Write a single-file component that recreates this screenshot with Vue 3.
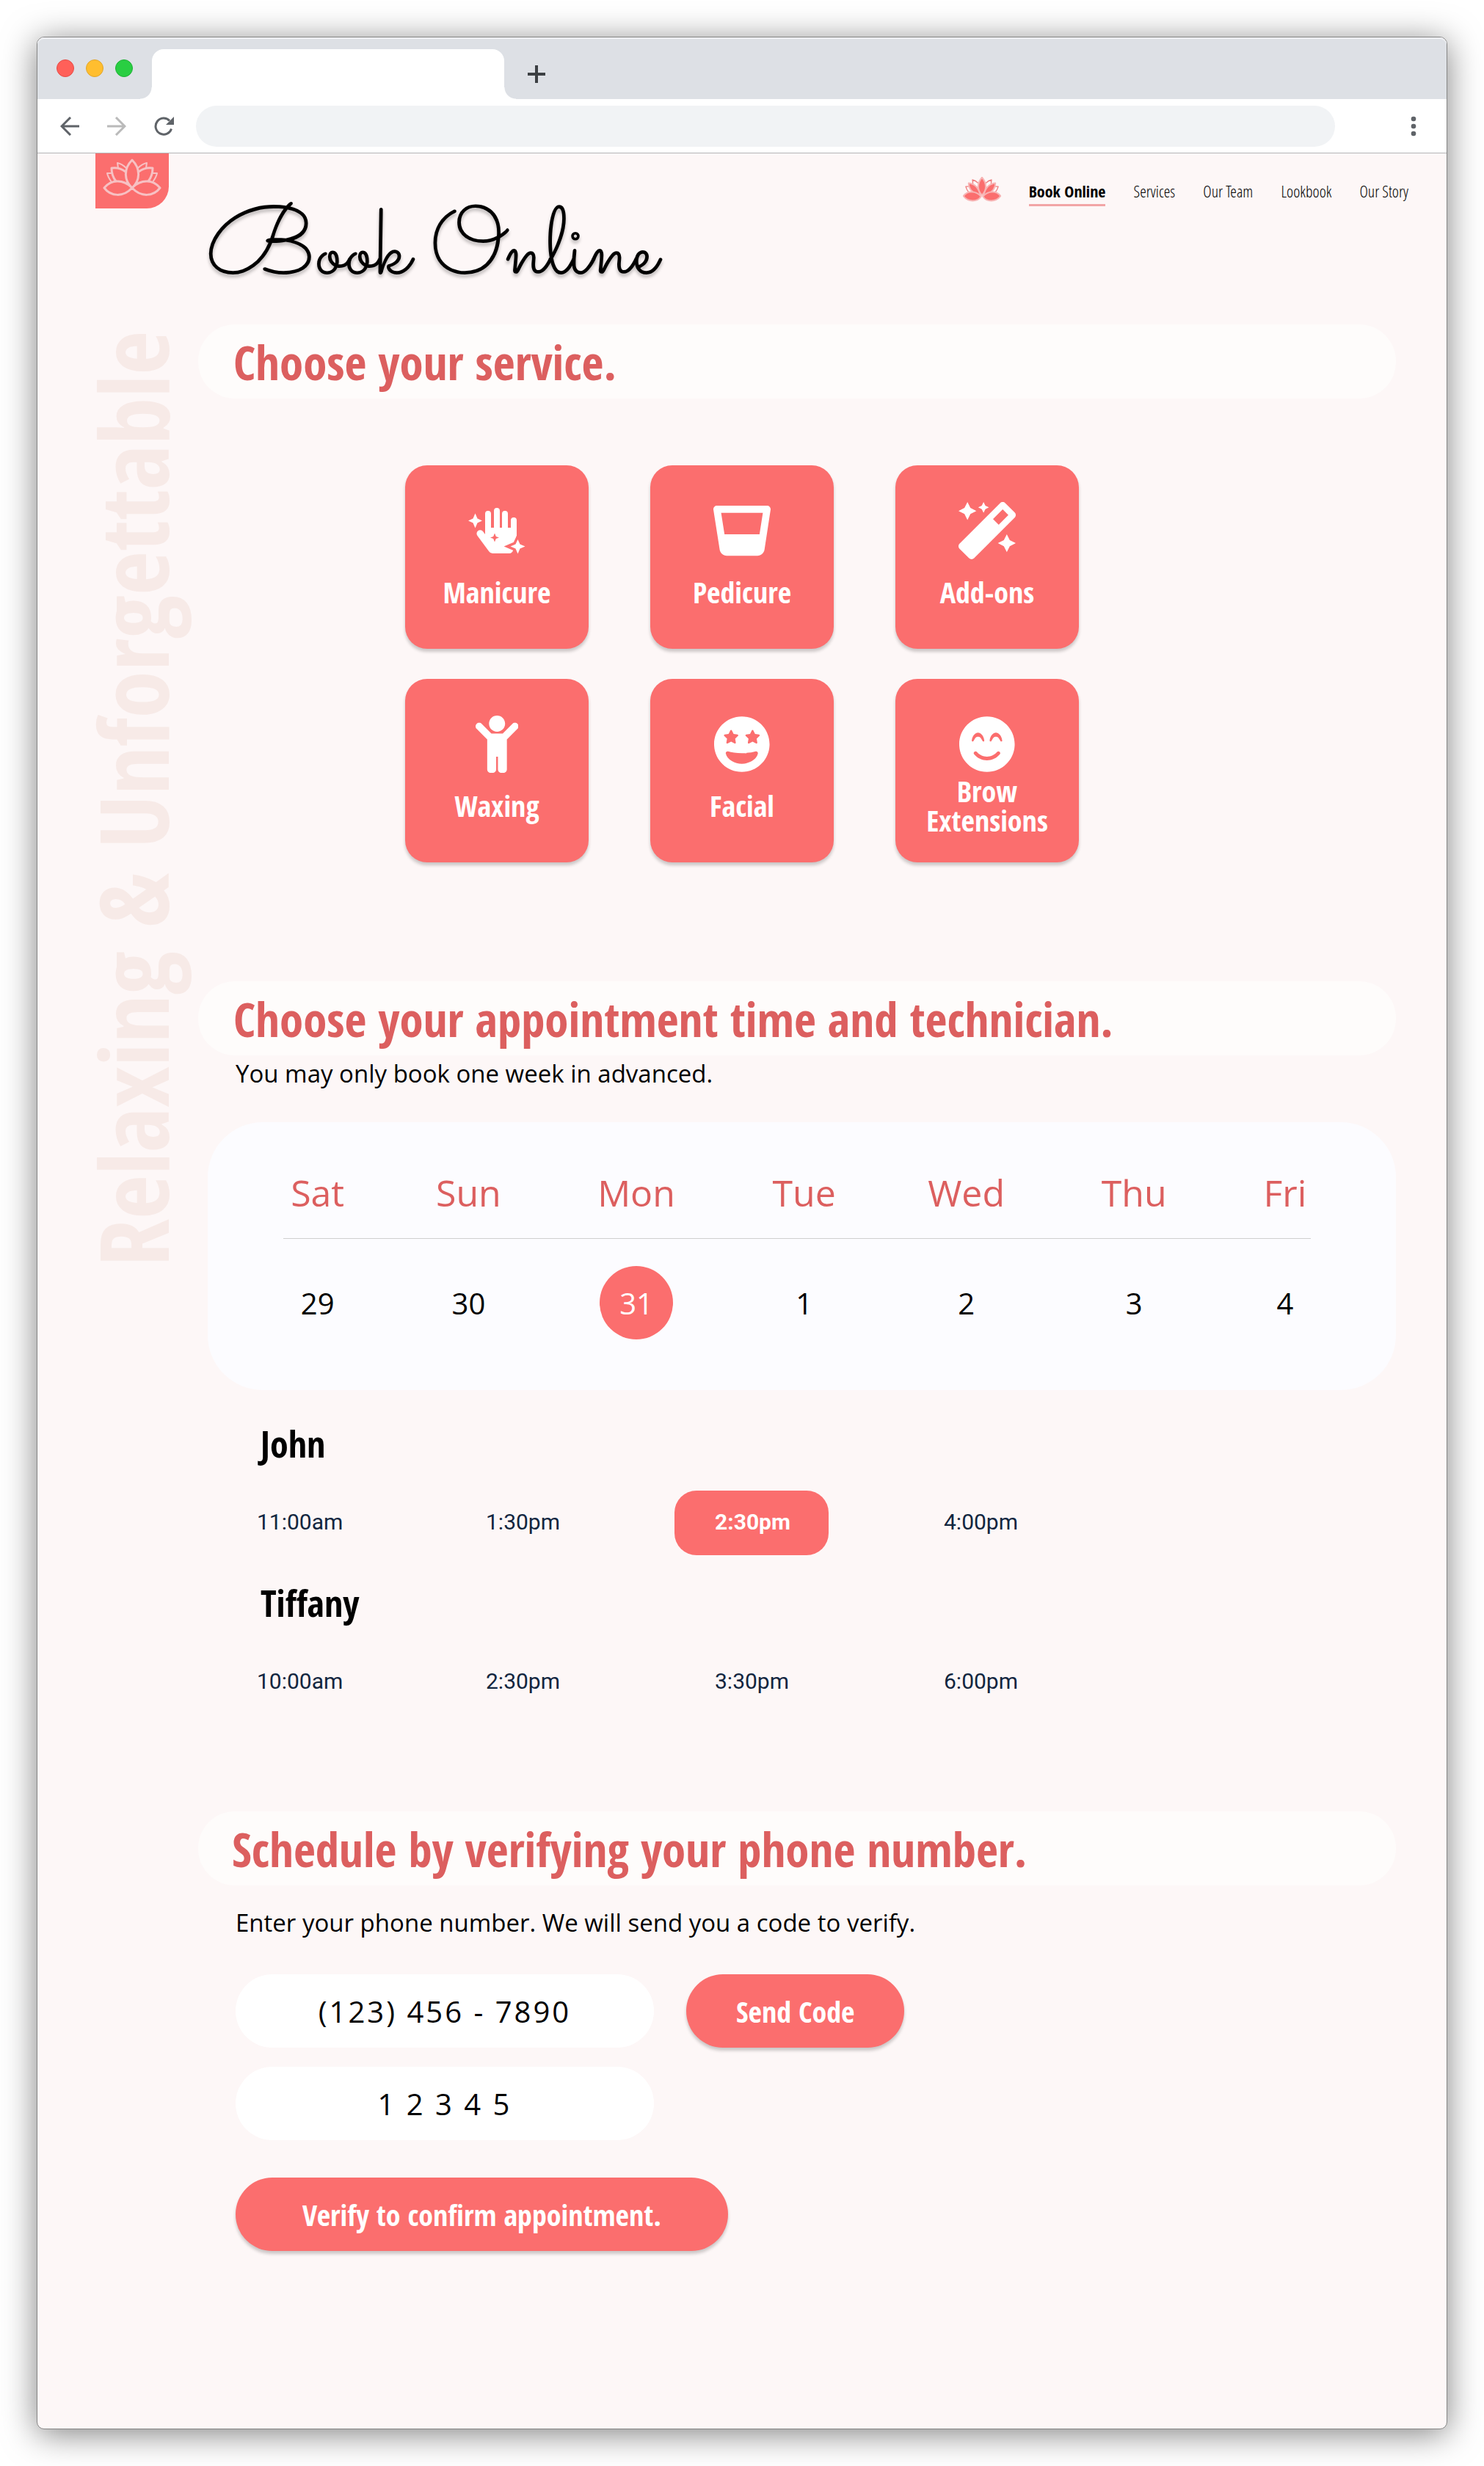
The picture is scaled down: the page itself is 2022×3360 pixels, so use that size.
<script setup>
import { ref } from 'vue'

const navLinks = ['Services', 'Our Team', 'Lookbook', 'Our Story']

const services = [
  { id: 'manicure', label: 'Manicure' },
  {
    id: 'pedicure',
    label: 'Pedicure',
    box: '0 0 512 512',
    path: 'M480 32H32C12.500 32-2.400 49.200.3 68.500l56 356.500c4.500 31.500 31.500 55 63.400 55h274.300c31.800 0 58.800-23.500 63.300-55L511.700 68.500c2.700-19.300-12.200-36.500-31.700-36.500zm-37.400 64l-30 192h-313L69.400 96h373.200z'
  },
  {
    id: 'addons',
    label: 'Add-ons',
    box: '0 0 512 512',
    path: 'M224 96l16-32 32-16-32-16-16-32-16 32-32 16 32 16 16 32zM80 160l26.660-53.330L160 80l-53.340-26.670L80 0 53.340 53.330 0 80l53.340 26.670L80 160zm352 128l-26.660 53.330L352 368l53.340 26.670L432 448l26.660-53.330L512 368l-53.340-26.670L432 288zm70.620-193.770L417.770 9.380C411.530 3.120 403.340 0 395.150 0c-8.190 0-16.380 3.120-22.630 9.380L9.380 372.520c-12.500 12.500-12.500 32.760 0 45.250l84.850 84.850c6.250 6.250 14.440 9.370 22.620 9.370 8.190 0 16.380-3.120 22.630-9.370l363.140-363.150c12.500-12.480 12.500-32.750 0-45.240zM359.450 203.460l-50.910-50.910 86.600-86.600 50.910 50.910-86.600 86.600z'
  },
  {
    id: 'waxing',
    label: 'Waxing',
    box: '0 0 384 512',
    path: 'M120 72c0-39.765 32.235-72 72-72s72 32.235 72 72c0 39.764-32.235 72-72 72s-72-32.236-72-72zm254.627 1.373c-12.496-12.497-32.758-12.497-45.254 0L242.745 160H141.254L54.627 73.373c-12.496-12.497-32.758-12.497-45.254 0-12.497 12.497-12.497 32.758 0 45.255L104 213.254V480c0 17.673 14.327 32 32 32h16c17.673 0 32-14.327 32-32V368h16v112c0 17.673 14.327 32 32 32h16c17.673 0 32-14.327 32-32V213.254l94.627-94.627c12.497-12.496 12.497-32.757 0-45.254z'
  },
  {
    id: 'facial',
    label: 'Facial',
    box: '0 0 496 512',
    path: 'M248 8C111 8 0 119 0 256s111 248 248 248 248-111 248-248S385 8 248 8zM94.600 168.900l34.900-5 15.500-31.600c2.900-5.800 11-5.700 13.900 0l15.500 31.600 34.900 5c6.200 1 8.900 8.600 4.300 13.200l-25.400 24.600 6 34.900c1 6.200-5.300 11-11 7.900L152 233.300l-31.300 16.300c-5.700 3.100-12-1.700-11-7.900l6-34.900-25.400-24.600c-4.600-4.700-1.900-12.300 4.300-13.300zM248 432c-60.600 0-134.500-38.300-143.800-93.300-2-11.800 9.300-21.500 20.700-17.900C155.100 330.500 200 336 248 336s92.900-5.500 123.100-15.200c11.500-3.700 22.600 6.200 20.700 17.900-9.300 55-83.200 93.300-143.800 93.300zm157.700-249.900l-25.400 24.600 6 34.900c1 6.200-5.300 11-11 7.900L344 233.300l-31.300 16.300c-5.700 3.100-12-1.700-11-7.900l6-34.900-25.400-24.600c-4.500-4.600-1.900-12.200 4.300-13.200l34.900-5 15.500-31.600c2.900-5.800 11-5.700 13.900 0l15.500 31.600 34.900 5c6.300.9 9 8.500 4.400 13.100z'
  },
  {
    id: 'brow',
    label: 'Brow Extensions',
    box: '0 0 496 512',
    path: 'M248 8C111 8 0 119 0 256s111 248 248 248 248-111 248-248S385 8 248 8zM112 223.400c3.300-42.100 32.200-71.400 56-71.400s52.700 29.300 56 71.400c.7 8.600-10.800 11.900-14.900 4.500l-9.500-17c-7.700-13.700-19.200-21.600-31.500-21.600s-23.800 7.900-31.500 21.600l-9.500 17c-4.300 7.400-15.800 4-15.100-4.500zm250.800 122.800C334.300 380.400 292.500 400 248 400s-86.300-19.600-114.800-53.800c-13.500-16.300 11-36.700 24.600-20.500 22.400 26.900 55.200 42.200 90.200 42.200s67.800-15.400 90.200-42.200c13.600-16.200 38.100 4.300 24.600 20.500zm6.200-118.300l-9.500-17c-7.700-13.700-19.200-21.600-31.500-21.600s-23.800 7.900-31.500 21.600l-9.500 17c-4.100 7.300-15.600 4-14.900-4.500 3.300-42.100 32.200-71.400 56-71.400s52.700 29.300 56 71.400c.6 8.600-11 11.900-15.100 4.500z'
  }
]

const days = [
  { name: 'Sat', date: 29 },
  { name: 'Sun', date: 30 },
  { name: 'Mon', date: 31 },
  { name: 'Tue', date: 1 },
  { name: 'Wed', date: 2 },
  { name: 'Thu', date: 3 },
  { name: 'Fri', date: 4 }
]

const technicians = [
  { name: 'John', slots: ['11:00am', '1:30pm', '2:30pm', '4:00pm'] },
  { name: 'Tiffany', slots: ['10:00am', '2:30pm', '3:30pm', '6:00pm'] }
]

const selectedDate = ref(31)
const selectedSlot = ref('John 2:30pm')
const phone = ref('(123) 456 - 7890')
const code = ref('1 2 3 4 5')
</script>

<template>
  <div class="desktop">
    <div class="window">
      <div class="tab-strip">
        <span class="light red"></span>
        <span class="light yellow"></span>
        <span class="light green"></span>
        <div class="tab"></div>
        <button class="chrome-button new-tab" aria-label="New tab">
          <svg width="24" height="24" viewBox="0 0 24 24"><path d="M12 0V24M0 12H24" stroke="#3c4043" stroke-width="4" /></svg>
        </button>
      </div>
      <div class="toolbar">
        <button class="chrome-button" aria-label="Back">
          <svg width="26" height="26" viewBox="0 0 26 26" fill="none" stroke="#5f6368" stroke-width="3"><path d="M26 13H3M14 1L2 13L14 25" /></svg>
        </button>
        <button class="chrome-button" aria-label="Forward">
          <svg width="26" height="26" viewBox="0 0 26 26" fill="none" stroke="#bababa" stroke-width="3"><path d="M0 13H23M12 1L24 13L12 25" /></svg>
        </button>
        <button class="chrome-button" aria-label="Reload">
          <svg width="27" height="26" viewBox="0 0 27 26"><path d="M23.500 16.500A11 11 0 1 1 21 5.500" fill="none" stroke="#5f6368" stroke-width="3" /><path d="M27 0V11H16Z" fill="#5f6368" /></svg>
        </button>
        <input class="address" type="text" aria-label="Address" />
        <button class="chrome-button menu" aria-label="Menu">
          <svg width="8" height="28" viewBox="0 0 8 28" fill="#5f6368"><circle cx="4" cy="4" r="3.300" /><circle cx="4" cy="14" r="3.300" /><circle cx="4" cy="24" r="3.300" /></svg>
        </button>
      </div>

      <div class="page">
        <aside class="rail">
          <a class="badge" href="#" aria-label="Home">
            <svg width="80" height="52" viewBox="0 0 80 52" fill="none" stroke="#f7c1c3" stroke-linejoin="round">
              <path stroke-width="3" d="M40 2C28 14 29 30 40 40C51 30 52 14 40 2ZM40 40C27 27 11 29 2 40C11 52 28 53 40 40ZM40 40C53 27 69 29 78 40C69 52 52 53 40 40Z" />
              <path stroke-width="3" d="M31 18C26 14 19 12 12 13C12 20 14 26 18 31M49 18C54 14 61 12 68 13C68 20 66 26 62 31" />
              <path stroke-width="2" d="M21 13L20 6C25 7 29 10 32 13M59 13L60 6C55 7 51 10 48 13M12 20L6 20C7 25 9 28 12 32M68 20L74 20C73 25 71 28 68 32" />
            </svg>
          </a>
          <p class="tagline">Relaxing &amp; Unforgettable</p>
        </aside>

        <main class="content">
          <header class="hero">
            <nav class="nav">
              <svg width="52" height="34" viewBox="0 0 80 52" fill="#fb6e6e" stroke="#f7b4b4" stroke-width="3" stroke-linejoin="round">
                <path fill="none" stroke="#ee8080" stroke-width="2" d="M21 14L20 6C25 7 29 10 32 13M59 14L60 6C55 7 51 10 48 13M12 20L6 20C7 25 9 28 12 32M68 20L74 20C73 25 71 28 68 32" />
                <path d="M36 38C34 24 25 14 12 13C12 25 20 34 36 38ZM44 38C46 24 55 14 68 13C68 25 60 34 44 38Z" />
                <path d="M40 1C29 14 30 28 40 38C50 28 51 14 40 1ZM38 41C27 28 9 29 1 40C11 53 30 53 38 41ZM42 41C53 28 71 29 79 40C69 53 50 53 42 41Z" />
              </svg>
              <a href="#" class="nav-link current">Book Online</a>
              <a v-for="link in navLinks" :key="link" href="#" class="nav-link">{{ link }}</a>
            </nav>
            <h1 class="title">Book Online</h1>
          </header>

          <section class="services">
            <h2 class="heading">Choose your service.</h2>
            <div class="cards">
              <button v-for="service in services" :key="service.id" class="card">
                <span class="card-icon">
                  <svg v-if="service.id === 'manicure'" width="78" height="63" viewBox="0 0 78 63">
                    <g fill="none" stroke="#fff" stroke-width="8" stroke-linecap="round">
                      <path d="M27 8V40M39 4V40M50 8V40M62 17V34" />
                    </g>
                    <path fill="#fff" d="M23 27H66V38L62 56Q60 62 56 62H33Q30 62 28 59L12.500 38A4.300 4.300 0 0 1 20 32L23 36Z" />
                    <path fill="#fb6e6e" d="M36 34.500L37.800 39L42 40.500L37.800 42L36 46.500L34.200 42L30 40.500L34.200 39Z" />
                    <path fill="#fff" d="M9.500 7.500L12.500 14.500L19 17.500L12.500 20.500L9.500 27.500L6.500 20.500L0 17.500L6.500 14.500Z" />
                    <path fill="#fff" stroke="#fb6e6e" stroke-width="7" paint-order="stroke" d="M67.500 43L70.500 49.500L77.500 52.500L70.500 55.500L67.500 62.500L64.500 55.500L57.500 52.500L64.500 49.500Z" />
                  </svg>
                  <svg v-else height="78" :viewBox="service.box" fill="#fff"><path :d="service.path" /></svg>
                </span>
                <span class="card-label">{{ service.label }}</span>
              </button>
            </div>
          </section>

          <section class="booking">
            <h2 class="heading">Choose your appointment time and technician.</h2>
            <p class="note">You may only book one week in advanced.</p>

            <div class="calendar">
              <table class="week">
                <thead>
                  <tr><th v-for="day in days" :key="day.name" scope="col">{{ day.name }}</th></tr>
                </thead>
                <tbody>
                  <tr>
                    <td v-for="day in days" :key="day.date">
                      <button class="date" :class="{ picked: day.date === selectedDate }" @click="selectedDate = day.date">{{ day.date }}</button>
                    </td>
                  </tr>
                </tbody>
              </table>
            </div>

            <div class="technicians">
              <div v-for="tech in technicians" :key="tech.name" class="technician">
                <h3 class="tech-name">{{ tech.name }}</h3>
                <div class="slots">
                  <button
                    v-for="slot in tech.slots"
                    :key="slot"
                    class="slot"
                    :class="{ picked: selectedSlot === tech.name + ' ' + slot }"
                    @click="selectedSlot = tech.name + ' ' + slot"
                  >{{ slot }}</button>
                </div>
              </div>
            </div>
          </section>

          <section class="verify">
            <h2 class="heading">Schedule by verifying your phone number.</h2>
            <label class="note" for="phone">Enter your phone number. We will send you a code to verify.</label>
            <form class="form" @submit.prevent>
              <div class="form-row">
                <input id="phone" v-model="phone" class="field" type="tel" />
                <button class="action" type="button">Send Code</button>
              </div>
              <input v-model="code" class="field" type="text" aria-label="Verification code" />
              <button class="action confirm" type="submit">Verify to confirm appointment.</button>
            </form>
          </section>
        </main>
      </div>
    </div>
  </div>
</template>

<style>
body {
  margin: 0;
  background: #fff;
}
</style>

<style scoped>
.desktop {
  padding: 50px;
  overflow: hidden;
  font-family: "Open Sans", "Noto Sans", sans-serif;
  color: #000;
}

.desktop *,
.desktop *::before,
.desktop *::after {
  box-sizing: border-box;
}

button,
input {
  margin: 0;
  padding: 0;
  border: 0;
  background: none;
  font: inherit;
  color: inherit;
}

button {
  cursor: pointer;
}

.window {
  border: 1px solid #858585;
  border-radius: 10px;
  background: #fdf7f7;
  box-shadow: 0 6px 46px rgba(0, 0, 0, 0.5);
}

/* Browser chrome */
.tab-strip {
  display: flex;
  align-items: center;
  height: 84px;
  padding-left: 26px;
  border-radius: 9px 9px 0 0;
  background: #dde0e5;
  box-shadow: inset 0 2px 1px #f0f1f4;
}

.light {
  width: 24px;
  height: 24px;
  margin-right: 16px;
  border: 1px solid;
  border-radius: 50%;
}

.red {
  background: #ff6059;
  border-color: #e64b46;
}

.yellow {
  background: #ffbe2f;
  border-color: #e0a52b;
}

.green {
  background: #29ce42;
  border-color: #1eb035;
}

.tab {
  position: relative;
  align-self: flex-end;
  width: 480px;
  height: 68px;
  margin-left: 10px;
  border-radius: 16px 16px 0 0;
  background: #fff;
}

.tab::before,
.tab::after {
  content: "";
  position: absolute;
  bottom: 0;
  width: 16px;
  height: 16px;
}

.tab::before {
  right: 100%;
  background: radial-gradient(circle at 0 0, transparent 15px, #fff 16px);
}

.tab::after {
  left: 100%;
  background: radial-gradient(circle at 100% 0, transparent 15px, #fff 16px);
}

.chrome-button {
  display: flex;
}

.new-tab {
  margin: 16px 0 0 32px;
}

.toolbar {
  display: flex;
  align-items: center;
  gap: 38px;
  height: 74px;
  padding: 0 41px 0 31px;
  border-bottom: 1px solid #b4b4b6;
  background: #fff;
}

.address {
  flex: 1;
  min-width: 0;
  height: 56px;
  margin: 0 65px 0 -8px;
  padding: 0 28px;
  border-radius: 28px;
  background: #f1f3f5;
  font-size: 24px;
}

/* Page */
.page {
  display: flex;
  padding-bottom: 242px;
}

.rail {
  flex: none;
  width: 219px;
  padding-left: 79px;
}

.badge {
  display: flex;
  justify-content: center;
  width: 100px;
  height: 75px;
  padding-top: 7px;
  border-radius: 0 0 30px 0;
  background: #fb6e6e;
}

.tagline {
  margin: 167px 0 0 -20px;
  writing-mode: vertical-rl;
  transform: rotate(180deg);
  font-family: "Open Sans Condensed", "Open Sans", sans-serif;
  font-size: 130px;
  font-weight: 700;
  line-height: 140px;
  white-space: nowrap;
  color: #f7eae7;
}

.content {
  flex: 1;
  min-width: 0;
}

.hero {
  height: 233px;
}

.nav {
  display: flex;
  justify-content: flex-end;
  gap: 38px;
  padding: 32px 52px 0 0;
}

.nav-link {
  margin-top: 4px;
  border-bottom: 3px solid transparent;
  padding-bottom: 3px;
  font-family: "Open Sans Condensed Light", "Open Sans", sans-serif;
  font-size: 22px;
  font-weight: 300;
  line-height: 30px;
  color: #000;
  text-decoration: none;
}

.current {
  border-color: #f2a5a6;
  font-family: "Open Sans Condensed", "Open Sans", sans-serif;
  font-weight: 700;
}

.title {
  margin: -5px 0 0 11px;
  font-family: "Sacramento", "Dancing Script", cursive;
  font-size: 130px;
  font-weight: 400;
  line-height: 140px;
  white-space: nowrap;
  text-shadow: 0 4px 4px rgba(0, 0, 0, 0.25);
}

.heading {
  margin: 0 69px 0 0;
  padding: 1px 0 0 48px;
  border-radius: 50px;
  background: #fefcfb;
  font-family: "Open Sans Condensed", "Open Sans", sans-serif;
  font-size: 65px;
  font-weight: 700;
  line-height: 100px;
  color: #dc5f5f;
}

.cards {
  display: grid;
  grid-template-columns: repeat(3, 250px);
  gap: 41px 84px;
  margin: 91px 0 162px 282px;
}

.card {
  display: flex;
  flex-direction: column;
  align-items: center;
  height: 250px;
  padding: 50px 30px 0;
  border-radius: 30px;
  background: #fb6e6e;
  box-shadow: 0 4px 4px rgba(0, 0, 0, 0.2);
  color: #fff;
}

.card-icon {
  display: flex;
  align-items: center;
  height: 78px;
}

.card-label {
  display: flex;
  align-items: center;
  height: 90px;
  font-family: "Open Sans Condensed", "Open Sans", sans-serif;
  font-size: 40px;
  font-weight: 700;
  line-height: 40px;
  text-align: center;
}

.note {
  display: block;
  margin: 3px 0 44px 51px;
  font-size: 33px;
  line-height: 44px;
}

.calendar {
  margin: 0 69px 43px 13px;
  padding: 62px 52px 69px 43px;
  border-radius: 75px;
  background: #fcfcff;
}

.week {
  width: 100%;
  border-collapse: collapse;
  table-layout: fixed;
  background: linear-gradient(#cfcfcf, #cfcfcf) 60px 96px / calc(100% - 124px) 1px no-repeat;
}

.week th {
  width: 13%;
  height: 68px;
  padding: 0 0 66px;
  font-size: 50px;
  font-weight: 400;
  line-height: 68px;
  color: #dc5f5f;
}

.week th:nth-child(1),
.week th:nth-child(6) {
  width: 14%;
}

.week th:nth-child(3) {
  width: 17%;
}

.week th:nth-child(5) {
  width: 16%;
}

.week td {
  padding: 0;
  text-align: center;
}

.date {
  width: 100px;
  height: 100px;
  border-radius: 50%;
  font-size: 40px;
}

.date.picked {
  background: #fb6e6e;
  color: #fff;
}

.technicians {
  display: grid;
  gap: 35px;
  margin-bottom: 132px;
}

.tech-name {
  margin: 0 0 34px 85px;
  font-family: "Open Sans Condensed", "Open Sans", sans-serif;
  font-size: 50px;
  font-weight: 700;
  line-height: 60px;
}

.slots {
  display: grid;
  grid-template-columns: repeat(4, 210px);
  column-gap: 102px;
  margin-left: 25px;
}

.slot {
  height: 88px;
  padding: 0 0 4px 55px;
  border-radius: 30px;
  font-family: Roboto, "Open Sans", sans-serif;
  font-size: 30px;
  text-align: left;
  color: #12263f;
}

.slot.picked {
  background: #fb6e6e;
  font-weight: 700;
  color: #fff;
}

.verify .heading {
  padding-left: 46px;
}

.verify .note {
  margin: 29px 0 48px 51px;
}

.form {
  display: flex;
  flex-direction: column;
  align-items: flex-start;
  gap: 26px;
  margin-left: 51px;
}

.form-row {
  display: flex;
  gap: 44px;
}

.field {
  width: 570px;
  height: 100px;
  border-radius: 50px;
  background: #fff;
  font-size: 40px;
  letter-spacing: 3px;
  text-align: center;
}

.action {
  height: 100px;
  padding: 0 68px;
  border-radius: 50px;
  background: #fb6e6e;
  box-shadow: 0 4px 4px rgba(0, 0, 0, 0.2);
  font-family: "Open Sans Condensed", "Open Sans", sans-serif;
  font-size: 40px;
  font-weight: 700;
  color: #fff;
}

.confirm {
  margin-top: 25px;
  padding: 0 91px;
}
</style>
